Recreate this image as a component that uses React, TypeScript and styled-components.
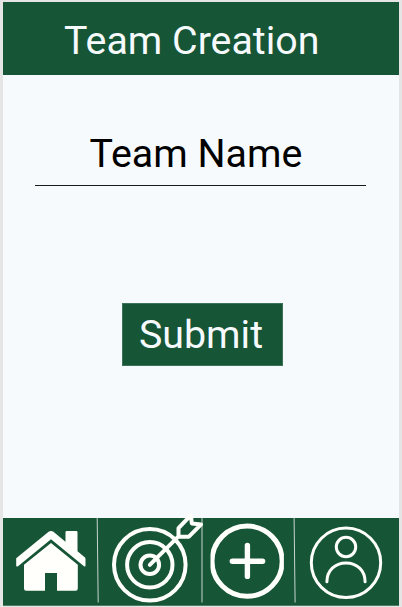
import React from "react";
import styled, { createGlobalStyle } from "styled-components";

const GREEN = "#165536";
const PAPER = "#f6fafd";
const WHITE = "#fffffb";

const GlobalStyle = createGlobalStyle`
  * { box-sizing: border-box; }
  body { margin: 0; background: #e5e5e5; font-family: Roboto, sans-serif; }
`;

const Backdrop = styled.div`
  height: 607px;
  width: 402px;
  padding: 1.6px 2.6px 1.4px 3px;
  overflow: hidden;
`;

const Screen = styled.div`
  display: flex;
  flex-direction: column;
  height: 604px;
  background: ${PAPER};
`;

const Header = styled.header`
  height: 73px;
  flex: none;
  padding: 16.4px 0 0 61px;
  background: ${GREEN};
`;

const Title = styled.h1`
  margin: 0;
  font-size: 39.35px;
  line-height: 47px;
  font-weight: 400;
  white-space: nowrap;
  color: ${PAPER};
`;

const Form = styled.form`
  flex: 1;
  display: flex;
  flex-direction: column;
  align-items: flex-start;
`;

const NameInput = styled.div`
  margin: 53.4px 0 0 32px;
  width: 331px;
  height: 58px;
  padding-left: 54.4px;
  border-bottom: 1px solid #171b1e;
  font-size: 39.35px;
  line-height: 52px;
  white-space: nowrap;
  color: #000;
`;

const SubmitButton = styled.button`
  margin: 117px 0 0 119px;
  width: 161px;
  height: 63px;
  padding: 1px 3px 0 0;
  border: 1px solid #3d7258;
  background: ${GREEN};
  color: ${PAPER};
  font: 400 39.35px/60px Roboto, sans-serif;
`;

const Nav = styled.nav`
  display: grid;
  grid-template-columns: 94.5px 104px 92.5px 1fr;
  flex: none;
  height: 87.6px;
  background: ${GREEN};
  border-bottom: 1px solid #4c7d65;
`;

const NavItem = styled.a`
  display: block;
  height: 87px;
  min-width: 0;
`;

const Glyph = styled.svg`
  display: block;
  width: 100%;
  height: 87px;
  overflow: visible;
  fill: none;
  stroke: ${WHITE};
  stroke-linejoin: round;
  stroke-linecap: round;
`;

const Divider = styled.line`
  stroke: #c6d6cd;
  stroke-width: 1;
  stroke-linecap: butt;
`;

const HomeIcon = () => (
  <Glyph viewBox="3 518 94.5 87">
    <Divider x1="97.2" y1="518" x2="98.2" y2="602.5" />
    <g fill={WHITE} stroke="none">
      <path d="M16.2 558.2 48.6 531.8Q51 530 53.4 531.8L65.5 541.7V532.2Q65.5 531 66.7 531H76.3Q77.5 531 77.5 532.2V551.3L85 557.4Q85.5 558 85.5 559V565.5Q85.5 567.3 84 566.2L51 539.2 18 566.2Q16.2 567.3 16.2 565.5Z" />
      <path d="M51 543 77.8 564.8V588.5Q77.8 590.7 75.6 590.7H57V573H45V590.7H26.2Q24 590.7 24 588.5V564.8Z" />
    </g>
  </Glyph>
);

const TargetIcon = () => (
  <Glyph viewBox="97.5 518 104 87" strokeWidth="4">
    <Divider x1="201.5" y1="518" x2="201.5" y2="602.5" />
    <circle cx="149.3" cy="564.8" r="35.8" />
    <circle cx="149.3" cy="564.8" r="22.7" />
    <circle cx="149.3" cy="564.8" r="9.3" />
    <path d="M149.3 564.8 177.5 536.8M178 536.7V528.2L190.4 515.2 191.3 523.4 200.6 524.4 188.4 536.7Z" />
  </Glyph>
);

const AddIcon = () => (
  <Glyph viewBox="201.5 518 92.5 87">
    <Divider x1="293.6" y1="518" x2="294.6" y2="602.5" />
    <clipPath id="add-bounds">
      <rect x="210" y="522" width="73.4" height="78" />
    </clipPath>
    <circle cx="246.6" cy="561.2" r="35.1" strokeWidth="5" clipPath="url(#add-bounds)" />
    <path d="M231.8 561.2H262.1M246.9 545.5V576.4" strokeWidth="5.4" />
  </Glyph>
);

const ProfileIcon = () => (
  <Glyph viewBox="294 518 105.4 87" strokeWidth="3">
    <circle cx="346" cy="562.8" r="34.7" />
    <circle cx="346" cy="547" r="9.7" />
    <path d="M326.9 581.8C326.9 570.5 335 562.9 346 562.9S365.1 570.5 365.1 581.8" />
  </Glyph>
);

export default function App() {
  return (
    <Backdrop>
      <GlobalStyle />
      <Screen>
        <Header>
          <Title>Team Creation</Title>
        </Header>
        <Form>
          <NameInput>Team Name</NameInput>
          <SubmitButton type="button">Submit</SubmitButton>
        </Form>
        <Nav>
          <NavItem aria-label="Home"><HomeIcon /></NavItem>
          <NavItem aria-label="Goals"><TargetIcon /></NavItem>
          <NavItem aria-label="Add"><AddIcon /></NavItem>
          <NavItem aria-label="Profile"><ProfileIcon /></NavItem>
        </Nav>
      </Screen>
    </Backdrop>
  );
}
